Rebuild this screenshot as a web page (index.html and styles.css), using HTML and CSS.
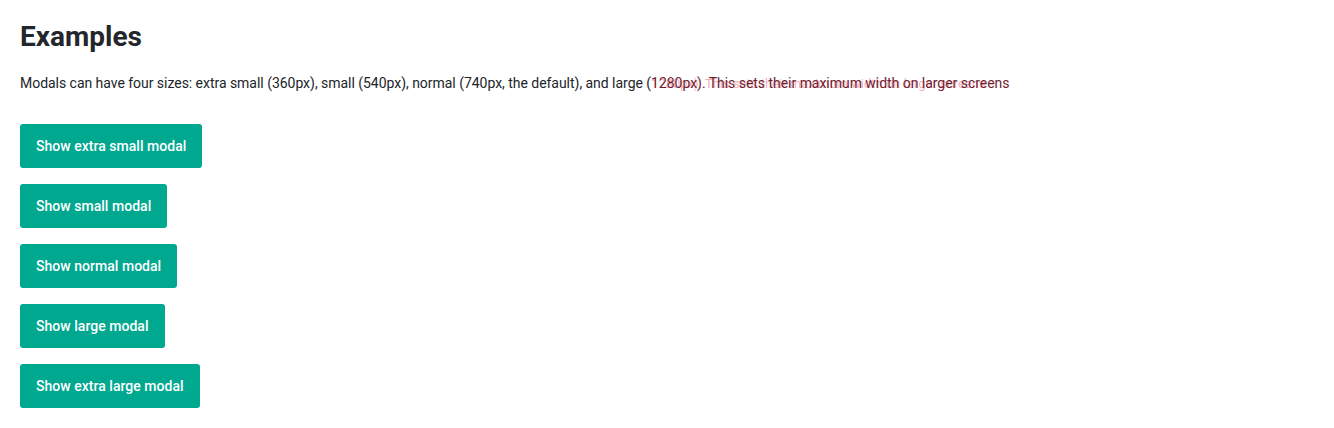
FILE: index.html
```html
<!DOCTYPE html>
<html lang="en">
<head>
<meta charset="utf-8">
<title>Modal sizes</title>
<link rel="stylesheet" href="styles.css">
</head>
<body>
<main class="page">
  <h2 class="title">Examples</h2>
  <p class="lead">Modals can have four sizes: extra small (360px), small (540px), normal (740px, the default), and large (<span class="marked"><span class="marked-text">1280px). This sets their maximum width on larger screens</span><span class="ghost" aria-hidden="true">1280px). This sets their maximum width on larger screens</span></span></p>
  <div class="buttons">
    <button class="btn" type="button">Show extra small modal</button>
    <button class="btn" type="button">Show small modal</button>
    <button class="btn" type="button">Show normal modal</button>
    <button class="btn" type="button">Show large modal</button>
    <button class="btn" type="button">Show extra large modal</button>
  </div>
</main>
</body>
</html>
```
FILE: styles.css
```css
html {
  margin: 0;
  padding: 0;
  background: #ffffff;
}
body {
  margin: 0;
  padding: 0;
  font-family: Roboto, "Liberation Sans", sans-serif;
  color: #212529;
}
.page {
  padding: 18px 20px 0 20px;
}
.title {
  margin: 0;
  font-size: 28px;
  line-height: 38px;
  font-weight: 700;
  color: #23262b;
}
.lead {
  margin: 15px 0 0 0;
  font-size: 14px;
  line-height: 24px;
  letter-spacing: -0.033px;
  color: #212529;
}
.marked {
  position: relative;
}
.marked-text {
  color: #6e1e30;
}
.ghost {
  position: absolute;
  left: 0;
  top: 1px;
  z-index: -1;
  white-space: nowrap;
  font-size: 13px;
  line-height: 16px;
  letter-spacing: 0;
  color: rgba(235, 105, 135, 0.55);
  pointer-events: none;
}
.buttons {
  display: flex;
  flex-direction: column;
  align-items: flex-start;
  gap: 16px;
  margin-top: 29px;
}
.btn {
  height: 44px;
  padding: 0 16px;
  border: 0;
  border-radius: 3px;
  background: #00a88f;
  color: #ffffff;
  font-family: Roboto, "Liberation Sans", sans-serif;
  font-size: 14px;
  font-weight: 500;
  letter-spacing: 0.03px;
  cursor: pointer;
}
```
